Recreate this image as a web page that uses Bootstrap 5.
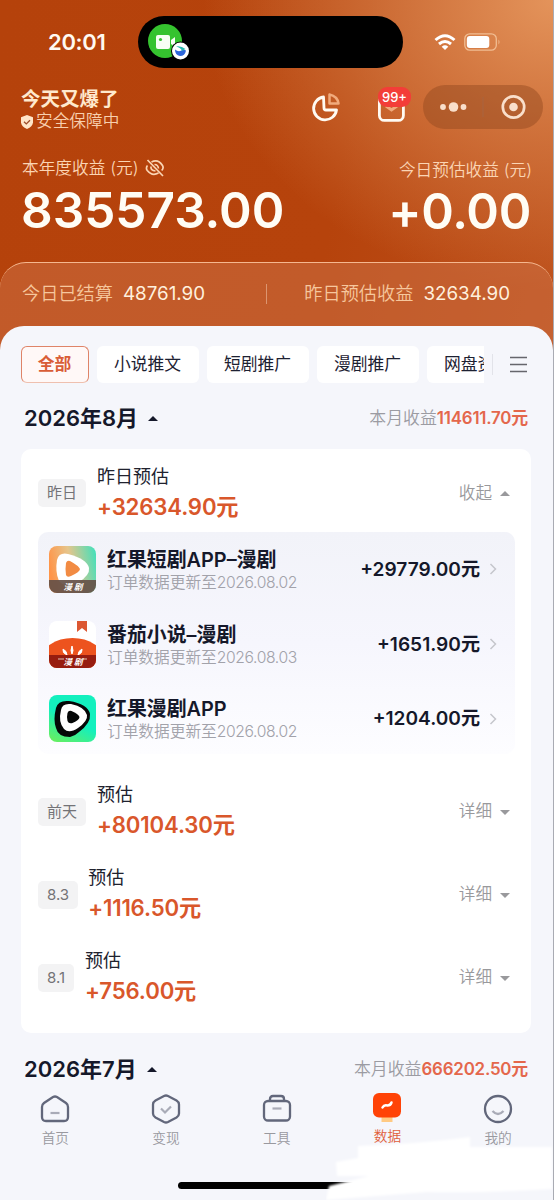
<!DOCTYPE html>
<html lang="zh-CN">
<head>
<meta charset="utf-8">
<meta name="viewport" content="width=device-width, initial-scale=1">
<title>收益数据</title>
<link href="https://cdn.jsdelivr.net/npm/bootstrap@5.3.0/dist/css/bootstrap.min.css" rel="stylesheet">
<style>
body{font-family:Inter,"Noto Sans CJK SC",sans-serif;background:#f5f6fb;color:#15182a;width:554px;height:1200px;overflow:hidden;line-height:1.2}
svg{display:block;flex:none}
.phone{height:1200px;width:554px;border-right:1px solid #a9abb3}
.hero{height:350px;background:radial-gradient(ellipse 350px 290px at 100% 0,rgba(232,155,98,.9) 0,rgba(214,125,70,.8) 42%,rgba(200,90,30,0) 100%),linear-gradient(100deg,#b5420b 0,#b6430c 60%,#bd501b 100%);color:#fffaf2}
.status{height:84px;padding:0 0 0 48px}
.clock{font-size:22px;font-weight:600;width:90px;letter-spacing:-.3px}
.island{width:265px;height:52px;border-radius:26px;background:#000;padding-left:9px}
.user{height:60px;padding:0 10px 0 21px}
.uname{font-size:19.5px;font-weight:700;line-height:22px;color:#ffe9cd}
.usub{font-size:16.7px;line-height:23px;color:#f8cfae;font-weight:350}
.capsule{width:120px;height:44px;border-radius:22px;background:rgba(146,72,30,.46)}
.cnt{top:-7px;left:3px;width:33px;height:20px;border-radius:9px;background:#f33d38;font-size:13px;font-weight:500;line-height:20px;text-align:center;color:#fff}
.totals{height:118px;padding:12px 22px 0 22px}
.tlabel{font-size:16.7px;line-height:24px;color:#fbd5b4;font-weight:350}
.big{font-size:49.5px;font-weight:600;line-height:60px;color:#fffdf5;margin-left:-1px}
.strip{height:88px;border-radius:26px 26px 0 0;background:rgba(204,112,67,.55);border-top:1.5px solid #f5b78f;padding:0 43px 25px 22px;font-size:18.2px;color:#f6c79d;font-weight:350}
.strip b{font-weight:400;color:#fff0dd;font-size:18.8px}
.panel{margin-top:-24px;height:874px;border-radius:24px 24px 0 0;background:#f5f6fb;position:relative}
.tabs{padding:20px 0 0 21px;height:58px}
.tabx{height:37px;border-radius:6px;background:#fff;width:102px;padding-right:1px;font-size:16.8px;flex:none;color:#1d2132}
.tabx.on{width:68px;border:1.6px solid #df8468;border-bottom-color:#efc0af;background:#fff8f7;color:#d95d37;font-weight:600}
.clip{width:463px;height:38px}
.month{height:65px;padding:4px 25px 0 24px}
.mt{font-size:22px;font-weight:600}
.sum{font-size:16.9px;color:#9b9ba2;font-weight:350}
.sum b{color:#e4674c;font-weight:600;letter-spacing:-.2px}
.tri-u,.tri-d{width:0;height:0;border:5px solid transparent}
.tri-u{border-bottom:5.5px solid currentColor;border-top:0}
.tri-d{border-top:5.5px solid currentColor;border-bottom:0}
.box{margin:0 22px 0 21px;height:584px;border-radius:10px;background:#fff;padding:0 17px}
.day{height:83px}
.chip{height:28px;padding:0 9px;border-radius:5px;background:#f3f3f4;color:#737377;font-size:15px}
.ti{font-size:18px;line-height:26px;color:#20222e}
.am{font-size:22.2px;font-weight:600;line-height:33px;color:#d9572b;letter-spacing:-.15px}
.more{font-size:16.6px;color:#99999c;font-weight:350;gap:8px;padding-right:4px;padding-top:1px}
.apps{height:222px;border-radius:10px;background:linear-gradient(#f2f3f9,#f6f6fd 50%,#fdfdff);margin:0 -1px 16px 0}
.app{height:74.7px;padding:0 18px 0 11px}
.an{font-size:19.9px;font-weight:600;line-height:26px;white-space:nowrap}
.ad{font-size:15.7px;line-height:19px;color:#a2a2aa;font-weight:350;white-space:nowrap}
.ad span{letter-spacing:-.4px}
.aa{font-size:19.1px;font-weight:600;white-space:nowrap}
.dock a{width:110.7px;font-size:13.7px;color:#99999f;text-decoration:none;line-height:18px;font-weight:350}
.dock a.on{color:#e0603a}
.home{left:178px;top:1182px;width:176px;height:7px;border-radius:4px;background:#000}
</style>
</head>
<body>
<div class="phone position-relative overflow-hidden">
<header class="hero">
  <div class="status d-flex align-items-center">
    <div class="clock">20:01</div>
    <div class="island d-flex align-items-center">
      <svg width="46" height="42" viewBox="0 0 46 42"><circle cx="18" cy="20" r="17" fill="#35c32f"/><rect x="9" y="14" width="14" height="14" rx="2" fill="#f7fff4"/><path d="M24 19l4-3v10l-4-3z" fill="#f7fff4"/><circle cx="13.500" cy="18.500" r="1.600" fill="#35c32f"/><circle cx="33.500" cy="30" r="9.500" fill="#000"/><circle cx="33.500" cy="30" r="8.500" fill="#fff"/><path d="M28 28.500q4 3.500 8 0l3 1q-1 5.500-6 5.500-5-1-5-6.500z" fill="#2c65da"/><path d="M29 25.500q5-1 9.500 2.500l-3.500 2q-1-3.500-6-4.500z" fill="#29b9b0"/></svg>
    </div>
    <div class="d-flex align-items-center" style="margin-left:31px">
      <svg width="22" height="17" viewBox="0 0 22 17" fill="none" stroke="#fff" stroke-width="3"><path d="M1.500 6Q11-2.500 20.500 6M5 10q6-5 12 0"/><path d="M7.700 12.700Q11 10 14.300 12.700L11 16z" fill="#fff" stroke="none"/></svg>
      <svg class="ms-2" width="38" height="18" viewBox="0 0 38 18"><rect x=".8" y=".8" width="31.500" height="16.400" rx="5" fill="none" stroke="#f1bd92" stroke-width="1.300"/><rect x="2.800" y="3" width="22.500" height="12" rx="3" fill="#fff"/><path d="M34.500 6.500q2 2.500 0 5z" fill="#f1bd92"/></svg>
    </div>
  </div>
  <div class="user d-flex">
    <div style="padding-top:4px">
      <div class="uname">今天又爆了</div>
      <div class="usub d-flex align-items-center"><svg width="12" height="14" viewBox="0 0 12 14" style="margin-right:3px"><path d="M6 0l6 2.300v5.200Q11.500 11.500 6 14 .5 11.500 0 7.500V2.300z" fill="#ffe5c8"/><path d="M3 6.700l2.300 2.200L9 5.200" fill="none" stroke="#9c4a28" stroke-width="1.300"/></svg>安全保障中</div>
    </div>
    <div class="ms-auto d-flex" style="padding-top:1px">
      <svg width="32" height="40" viewBox="0 0 32 40" fill="none" style="margin-right:34px"><path d="M14.500 12A11.500 11.500 0 1 0 27.500 25H17q-2 0-2-2z" stroke="#fffaf2" stroke-width="2.800" stroke-linejoin="round"/><path d="M20.500 9.500v9h9Q28.500 11.300 20.500 9.500z" stroke="#f1aa7c" stroke-width="2.500" stroke-linejoin="round"/></svg>
      <div class="position-relative" style="width:48px;margin-top:9px">
        <svg width="30" height="30" viewBox="0 0 30 30" fill="none"><rect x="4.400" y="2.400" width="24" height="24" rx="5" stroke="#fffaf2" stroke-width="2.800"/><path d="M11 12l5.500 4L22 12" stroke="#f1aa7c" stroke-width="3"/></svg>
        <span class="cnt position-absolute">99+</span>
      </div>
      <div class="capsule d-flex align-items-center">
        <svg width="120" height="44" viewBox="0 0 120 44" fill="#f9dfcb"><circle cx="20" cy="22" r="2.900"/><circle cx="30.500" cy="22" r="4.800"/><circle cx="40.500" cy="22" r="2.900"/><path d="M60 12v20" stroke="#a86540"/><circle cx="90.500" cy="22" r="10.700" fill="none" stroke="#f9dfcb" stroke-width="2.700"/><circle cx="90.500" cy="22" r="4.300"/></svg>
      </div>
    </div>
  </div>
  <div class="totals d-flex justify-content-between">
    <div>
      <div class="tlabel d-flex align-items-center">本年度收益 (元)<svg width="20" height="18" viewBox="0 0 20 18" fill="none" stroke="#fbd5b4" stroke-width="1.700" style="margin-left:7px"><path d="M6.500 3Q13-.5 17.500 6.500q1.500 2.500-.8 5M13.500 14Q7 17.500 2.300 11.500.5 9 2.500 6.500M2.500 1l15.500 16M9.500 5.500q3.500 0 4 4M6 7.500q-.5 4 4.500 4.500"/></svg></div>
      <div class="big">835573.00</div>
    </div>
    <div class="text-end">
      <div class="tlabel" style="padding-top:2px;margin-bottom:-1px;margin-right:-1px">今日预估收益 (元)</div>
      <div class="big" style="letter-spacing:-.3px">+0.00</div>
    </div>
  </div>
  <div class="strip d-flex align-items-center">
    <span>今日已结算</span><b style="margin-left:10px">48761.90</b>
    <i style="width:1px;height:20px;background:#dc9570;margin-left:61px"></i>
    <span class="ms-auto">昨日预估收益</span><b style="margin-left:10px">32634.90</b>
  </div>
</header>
<main class="panel">
  <div class="tabs d-flex">
    <div class="clip d-flex overflow-hidden" style="gap:8px">
      <div class="tabx on d-flex align-items-center justify-content-center">全部</div>
      <div class="tabx d-flex align-items-center justify-content-center">小说推文</div>
      <div class="tabx d-flex align-items-center justify-content-center">短剧推广</div>
      <div class="tabx d-flex align-items-center justify-content-center">漫剧推广</div>
      <div class="tabx d-flex align-items-center justify-content-center">网盘资源</div>
    </div>
    <svg width="45" height="37" viewBox="0 0 45 37" fill="none"><path d="M8.500 8v21" stroke="#e2e3e9"/><path d="M26 11.500h17M26 18.500h17M26 25.500h17" stroke="#66666c" stroke-width="1.700"/></svg>
  </div>
  <div class="month d-flex align-items-center"><span class="mt">2026年8月</span><i class="tri-u" style="margin-left:10px"></i><span class="sum ms-auto">本月收益<b>114611.70元</b></span></div>
  <section class="box">
    <div class="day d-flex align-items-center" style="padding-top:5px">
      <span class="chip d-flex align-items-center">昨日</span>
      <div style="margin-left:11px;padding-top:1px"><div class="ti">昨日预估</div><div class="am">+32634.90元</div></div>
      <div class="more ms-auto d-flex align-items-center">收起<i class="tri-u"></i></div>
    </div>
    <div class="apps">
      <div class="app d-flex align-items-center">
        <svg width="47" height="47" viewBox="0 0 47 47"><defs><linearGradient id="g1" x1="0" y1=".4" x2="1" y2=".2"><stop offset="0" stop-color="#ff9448"/><stop offset=".45" stop-color="#e6c58b"/><stop offset="1" stop-color="#48dfb9"/></linearGradient><clipPath id="c1"><rect width="47" height="47" rx="8"/></clipPath></defs><g clip-path="url(#c1)"><rect width="47" height="47" fill="url(#g1)"/><path d="M8 14Q10 6 19 8q19 5 21 14 1 7-10 14-14 7-20-1-4-9-2-21z" fill="#fff"/><path d="M17 17q1-3 4-2 9 5 10 8 0 3-9 7-4 2-5-1-1-6 0-12z" fill="#f28b43"/><path d="M0 34h47v13H0z" fill="#655048" opacity=".92"/></g><text x="24" y="43.500" text-anchor="middle" font-size="8.500" font-weight="700" font-style="italic" fill="#fff">漫 剧</text></svg>
        <div style="margin-left:11px"><div class="an">红果短剧APP–漫剧</div><div class="ad">订单数据更新至<span>2026.08.02</span></div></div>
        <span class="aa ms-auto">+29779.00元</span><svg width="8" height="12" viewBox="0 0 8 12" style="margin-left:9px"><path d="M1.500 1l5 5-5 5" fill="none" stroke="#c5c6cc" stroke-width="1.500"/></svg>
      </div>
      <div class="app d-flex align-items-center">
        <svg width="47" height="47" viewBox="0 0 47 47"><defs><clipPath id="c2"><rect width="47" height="47" rx="8"/></clipPath></defs><g clip-path="url(#c2)"><rect width="47" height="47" fill="#fff"/><ellipse cx="23.500" cy="38" rx="31" ry="21" fill="#ed531e"/><path d="M28 0h10v11l-5-4-5 4z" fill="#dc5732"/><path d="M23 25q-2 5 0 8 2-3 0-8zM14 28q-1 4 4 6 0-4-4-6zM33 28q1 4-4 6 0-4 4-6z" fill="#fff" stroke="#fff"/><path d="M0 34h47v13H0z" fill="#971d10"/><path d="M9 38h6M33 38h5" stroke="#c78b7d" stroke-width="1.500"/></g><text x="24" y="43.500" text-anchor="middle" font-size="8.500" font-weight="700" font-style="italic" fill="#fff">漫 剧</text></svg>
        <div style="margin-left:11px"><div class="an">番茄小说–漫剧</div><div class="ad">订单数据更新至<span>2026.08.03</span></div></div>
        <span class="aa ms-auto">+1651.90元</span><svg width="8" height="12" viewBox="0 0 8 12" style="margin-left:9px"><path d="M1.500 1l5 5-5 5" fill="none" stroke="#c5c6cc" stroke-width="1.500"/></svg>
      </div>
      <div class="app d-flex align-items-center">
        <svg width="47" height="47" viewBox="0 0 47 47"><defs><linearGradient id="g3" x1=".7" y1="0" x2=".2" y2="1"><stop offset=".5" stop-color="#13f0be"/><stop offset="1" stop-color="#63ef65"/></linearGradient></defs><rect width="47" height="47" rx="8" fill="url(#g3)"/><path d="M7 13Q9 5 20 6q19 3 21 13 1 9-11 18-4 4-9 5-12 0-14-9-3-8 0-20z" fill="#050707"/><path d="M12 15Q13 8 22 9q14 3 16 11 1 6-9 13-9 6-14 1-6-7-3-19z" fill="#fff"/><path d="M18.500 18q1-3 4-2 7 3 8 6 0 3-7 6-4 1-5-2-1-4 0-8z" fill="#050707"/></svg>
        <div style="margin-left:11px"><div class="an">红果漫剧APP</div><div class="ad">订单数据更新至<span>2026.08.02</span></div></div>
        <span class="aa ms-auto">+1204.00元</span><svg width="8" height="12" viewBox="0 0 8 12" style="margin-left:9px"><path d="M1.500 1l5 5-5 5" fill="none" stroke="#c5c6cc" stroke-width="1.500"/></svg>
      </div>
    </div>
    <div class="day d-flex align-items-center">
      <span class="chip d-flex align-items-center">前天</span>
      <div style="margin-left:11px"><div class="ti">预估</div><div class="am">+80104.30元</div></div>
      <div class="more ms-auto d-flex align-items-center">详细<i class="tri-d"></i></div>
    </div>
    <div class="day d-flex align-items-center">
      <span class="chip d-flex align-items-center">8.3</span>
      <div style="margin-left:10px"><div class="ti">预估</div><div class="am">+1116.50元</div></div>
      <div class="more ms-auto d-flex align-items-center">详细<i class="tri-d"></i></div>
    </div>
    <div class="day d-flex align-items-center">
      <span class="chip d-flex align-items-center">8.1</span>
      <div style="margin-left:11px"><div class="ti">预估</div><div class="am">+756.00元</div></div>
      <div class="more ms-auto d-flex align-items-center">详细<i class="tri-d"></i></div>
    </div>
  </section>
  <div class="month d-flex align-items-center" style="padding-top:7px"><span class="mt">2026年7月</span><i class="tri-u" style="margin-left:10px"></i><span class="sum ms-auto">本月收益<b>666202.50元</b></span></div>
</main>
<div class="home position-absolute"></div>
<svg class="position-absolute" style="left:326px;top:1134px" width="227" height="66" viewBox="0 0 227 66"><defs><filter id="soft"><feGaussianBlur stdDeviation="1"/></filter></defs><path d="M32 12q60-2 112-9v10l82 0v42q-70 4-125 3l-101 8 3-14 28-7 12-3-32 0-1-14 22-4z" fill="#fff" filter="url(#soft)"/></svg>
<nav class="dock d-flex position-absolute" style="left:0;top:1093px">
  <a class="d-flex flex-column align-items-center"><svg width="32" height="32" viewBox="0 0 32 32" fill="none"><path d="M14 4q2-1 4 0l9 6q2 1.500 2 4v10q0 4-4 4H7q-4 0-4-4V14q0-2.500 2-4z" stroke="#62677b" stroke-width="2.300"/><path d="M11.500 20h9" stroke="#a9abb7" stroke-width="2.200"/></svg><span class="pt-1">首页</span></a>
  <a class="d-flex flex-column align-items-center"><svg width="32" height="32" viewBox="0 0 32 32" fill="none"><path d="M14 3q2-1 4 0l8.500 4.500q2.500 1.500 2.500 4v9q0 2.500-2.500 4L18 29q-2 1-4 0l-8.500-4.500Q3 23 3 20.500v-9Q3 9 5.500 7.500z" stroke="#62677b" stroke-width="2.300"/><path d="M11 15.500l4 4 6-6" stroke="#a9abb7" stroke-width="2.200"/></svg><span class="pt-1">变现</span></a>
  <a class="d-flex flex-column align-items-center"><svg width="32" height="32" viewBox="0 0 32 32" fill="none"><rect x="3" y="8" width="26" height="19.500" rx="4" stroke="#62677b" stroke-width="2.300"/><path d="M9 8V6q0-3 3-3h8q3 0 3 3v2" stroke="#62677b" stroke-width="2.300"/><path d="M11.500 15.500h9" stroke="#a9abb7" stroke-width="2.200"/></svg><span class="pt-1">工具</span></a>
  <a class="on d-flex flex-column align-items-center"><svg width="32" height="32" viewBox="0 0 32 32" fill="none"><path d="M10.500 23h11v6h-11z" fill="#ffca83"/><rect x="2" y="0" width="28" height="24.500" rx="6" fill="#ff4307"/><path d="M11.500 14.500q1.500-3 5-2 3 0 4-3" stroke="#fff" stroke-width="2.500" stroke-linecap="round"/></svg><span style="padding-top:2px">数据</span></a>
  <a class="d-flex flex-column align-items-center"><svg width="32" height="32" viewBox="0 0 32 32" fill="none"><circle cx="16" cy="16" r="13" stroke="#62677b" stroke-width="2.300"/><path d="M10.500 18q5.500 6 11 0" stroke="#a9abb7" stroke-width="2.300"/></svg><span class="pt-1">我的</span></a>
</nav>
</div>
<script src="https://cdn.jsdelivr.net/npm/bootstrap@5.3.0/dist/js/bootstrap.bundle.min.js"></script>
</body>
</html>
